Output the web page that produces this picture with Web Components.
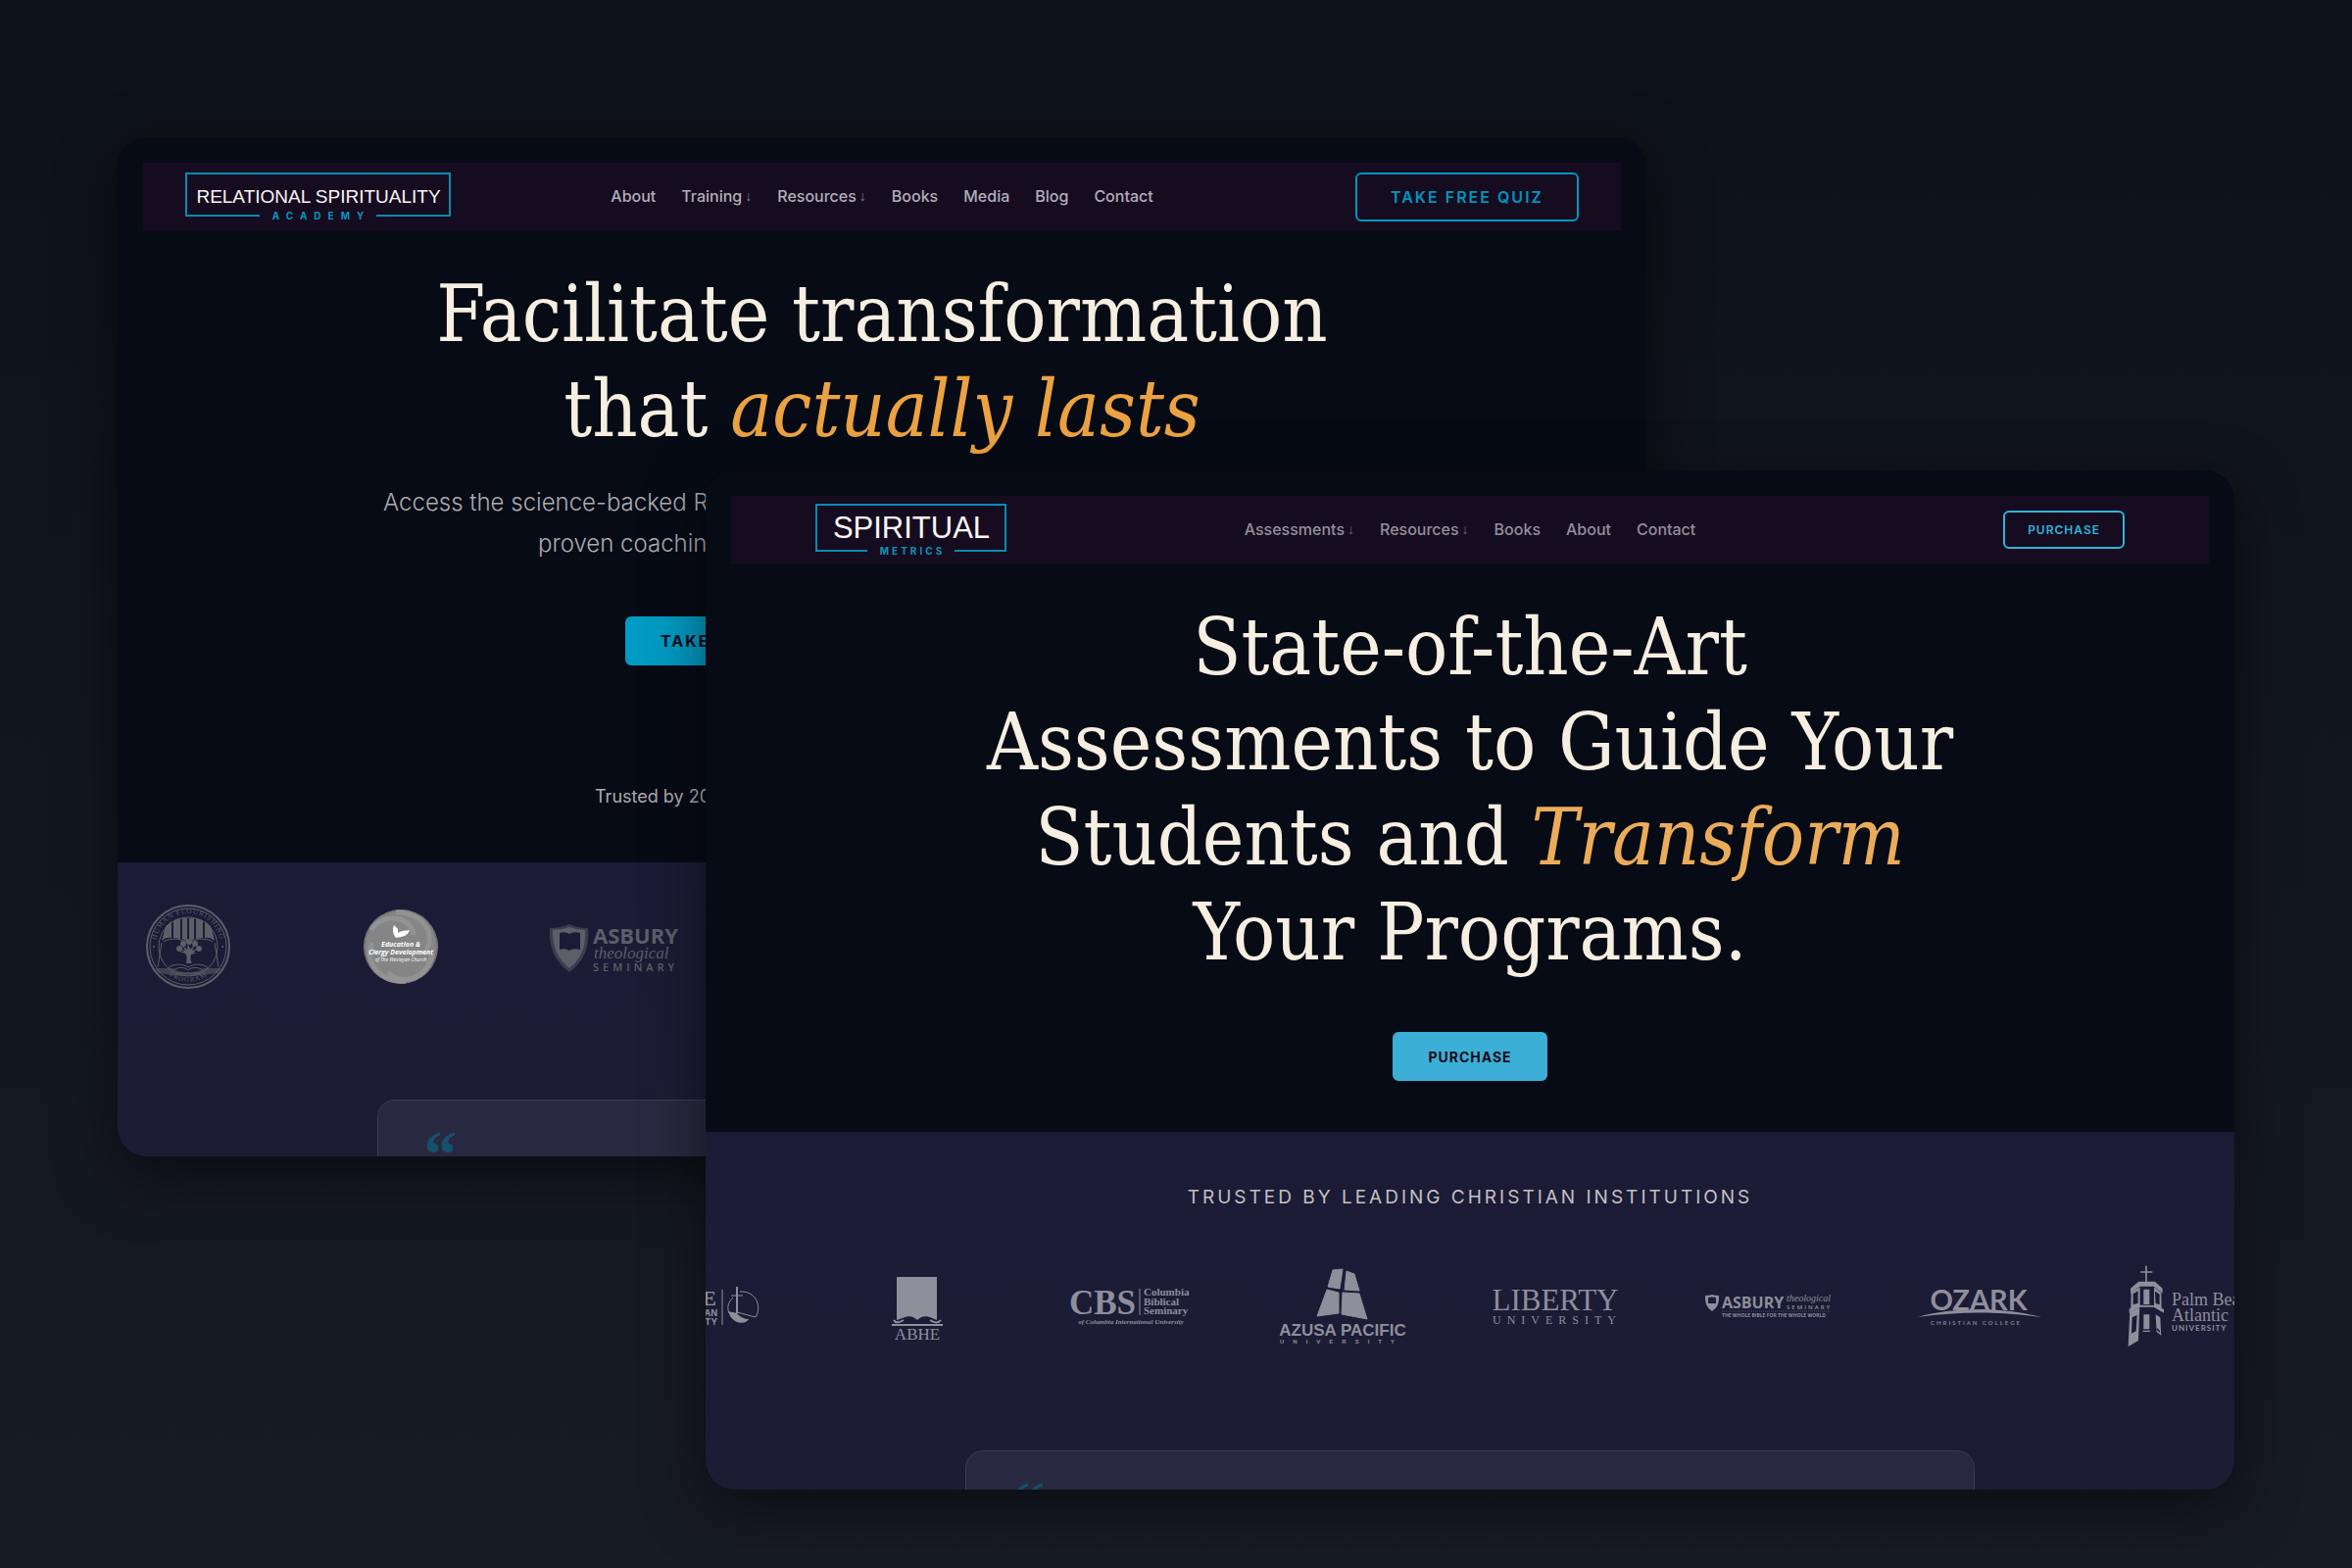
<!DOCTYPE html>
<html lang="en">
<head>
<meta charset="utf-8">
<meta name="viewport" content="width=device-width, initial-scale=1">
<title>Relational Spirituality Academy &amp; Spiritual Metrics</title>
<style>
    body {
        margin: 0;
        font-family: Inter, "Liberation Sans", sans-serif;
    }
</style>
</head>
<body>
<show-case>
    <site-window class="academy">
        <site-nav>
            <brand-logo slot="logo" name="academy"></brand-logo>
            <nav-link>About</nav-link>
            <nav-link menu>Training</nav-link>
            <nav-link menu>Resources</nav-link>
            <nav-link>Books</nav-link>
            <nav-link>Media</nav-link>
            <nav-link>Blog</nav-link>
            <nav-link>Contact</nav-link>
            <action-button slot="action" kind="outline">TAKE FREE QUIZ</action-button>
        </site-nav>
        <hero-title>Facilitate transformation<br>that <em>actually lasts</em></hero-title>
        <hero-lead>
            <span slot="first">Access the science-backed Relational</span>
            <span slot="second">proven coaching</span>
            <action-button slot="action" kind="solid">TAKE FREE QUIZ</action-button>
            <span slot="note">Trusted by 200+</span>
        </hero-lead>
        <trust-section slot="lower">
            <partner-logo name="flourishing"></partner-logo>
            <partner-logo name="clergy"></partner-logo>
            <partner-logo name="asbury"></partner-logo>
        </trust-section>
    </site-window>

    <site-window class="metrics">
        <site-nav>
            <brand-logo slot="logo" name="metrics"></brand-logo>
            <nav-link menu>Assessments</nav-link>
            <nav-link menu>Resources</nav-link>
            <nav-link>Books</nav-link>
            <nav-link>About</nav-link>
            <nav-link>Contact</nav-link>
            <action-button slot="action" kind="outline" small>PURCHASE</action-button>
        </site-nav>
        <hero-title>State-of-the-Art<br>Assessments to Guide Your<br>Students and <em>Transform</em><br>Your Programs.</hero-title>
        <hero-action>
            <action-button kind="solid" small>PURCHASE</action-button>
        </hero-action>
        <trust-section slot="lower" heading="TRUSTED BY LEADING CHRISTIAN INSTITUTIONS">
            <partner-logo name="christian"></partner-logo>
            <partner-logo name="abhe"></partner-logo>
            <partner-logo name="cbs"></partner-logo>
            <partner-logo name="azusa"></partner-logo>
            <partner-logo name="liberty"></partner-logo>
            <partner-logo name="asbury-wide"></partner-logo>
            <partner-logo name="ozark"></partner-logo>
            <partner-logo name="palm"></partner-logo>
        </trust-section>
    </site-window>
</show-case>

<script>
class ShowCase extends HTMLElement {

    constructor() {
        super();
        this.shadowDOM = this.attachShadow({ mode: "open" });
        this.shadowDOM.innerHTML = `
        <style>
            :host {
                display: block;
                position: relative;
                min-height: 100vh;
                overflow: hidden;
                background: linear-gradient(180deg, #0d1118 0%, #171b25 100%);
            }
            /* two overlapping browser windows on a free canvas */
            ::slotted(site-window) {
                position: absolute;
                width: 65%;
                aspect-ratio: 3 / 2;
            }
            ::slotted(.academy) {
                left: 5%;
                top: 8.75%;
                --accent: #0096be;
                --solid: #009bc4;
                --gold: #eba242;
                --link: #b2aeb8;
                --nav-pad: 43px;
                --row-start: 7px;
                --row-top: 36px;
                --row-bottom: 106px;
                --logo: #5d5e68;
            }
            ::slotted(.metrics) {
                left: 30%;
                top: 30%;
                --accent: #2eb5da;
                --solid: #3bafd5;
                --gold: #ebac5a;
                --link: #928f9c;
                --nav-pad: 86px;
                --row-start: -66px;
                --row-top: 46px;
                --row-bottom: 97px;
                --logo: #8f8e9b;
            }
        </style>
        <slot></slot>`;
    }
}

class SiteWindow extends HTMLElement {

    constructor() {
        super();
        this.shadowDOM = this.attachShadow({ mode: "open" });
        this.shadowDOM.innerHTML = `
        <style>
            :host {
                display: flex;
                flex-direction: column;
                overflow: hidden;
                border-radius: 30px;
                background: #070b15;
                box-shadow: 0 20px 60px rgba(0, 0, 0, 0.5);
            }
            .hero {
                padding: 26px 26px 52px;
            }
        </style>
        <div class="hero"><slot></slot></div>
        <slot name="lower"></slot>`;
    }
}

class SiteNav extends HTMLElement {

    constructor() {
        super();
        this.shadowDOM = this.attachShadow({ mode: "open" });
        this.shadowDOM.innerHTML = `
        <style>
            :host {
                display: grid;
                grid-template-columns: 1fr auto 1fr;
                align-items: center;
                height: 69px;
                padding: 0 var(--nav-pad);
                background: #160c20;
            }
            nav {
                display: flex;
                gap: 26px;
                padding-bottom: 2px;
            }
            ::slotted(action-button) {
                justify-self: end;
            }
        </style>
        <slot name="logo"></slot>
        <nav><slot></slot></nav>
        <slot name="action"></slot>`;
    }
}

class NavLink extends HTMLElement {

    constructor() {
        super();
        this.shadowDOM = this.attachShadow({ mode: "open" });
    }

    connectedCallback() {
        const arrow = this.hasAttribute("menu") ? `<span class="arrow">↓</span>` : "";
        this.shadowDOM.innerHTML = `
        <style>
            :host {
                display: block;
            }
            a {
                display: flex;
                align-items: center;
                gap: 3px;
                color: var(--link);
                font-size: 16px;
                font-weight: 500;
                line-height: 24px;
                text-decoration: none;
            }
            .arrow {
                font-family: "Liberation Sans", sans-serif;
                font-size: 14px;
                opacity: 0.7;
            }
        </style>
        <a href="#"><span><slot></slot></span>${arrow}</a>`;
    }
}

class ActionButton extends HTMLElement {

    constructor() {
        super();
        this.shadowDOM = this.attachShadow({ mode: "open" });
        this.shadowDOM.innerHTML = `
        <style>
            :host {
                display: block;
            }
            button {
                display: block;
                box-sizing: border-box;
                height: 50px;
                padding: 0 34px;
                border: 2px solid var(--accent);
                border-radius: 6px;
                background: transparent;
                color: var(--accent);
                font-family: inherit;
                font-size: 16px;
                font-weight: 600;
                letter-spacing: 2px;
                white-space: nowrap;
            }
            :host([kind="solid"]) button {
                border-color: var(--solid);
                background: var(--solid);
                color: #160c20;
                font-weight: 700;
            }
            :host([small]) button {
                font-size: 14px;
                letter-spacing: 1px;
            }
            :host([small][kind="outline"]) button {
                height: 39px;
                padding: 0 23px;
                font-size: 12px;
            }
        </style>
        <button type="button"><slot></slot></button>`;
    }
}

class HeroTitle extends HTMLElement {

    constructor() {
        super();
        this.shadowDOM = this.attachShadow({ mode: "open" });
        this.shadowDOM.innerHTML = `
        <style>
            :host {
                display: block;
                margin-top: 37px;
            }
            h1 {
                margin: 0;
                color: #f6eee1;
                font-family: "DejaVu Serif Condensed", "DejaVu Serif", serif;
                font-size: 80px;
                font-weight: 400;
                line-height: 97px;
                text-align: center;
            }
            ::slotted(em) {
                color: var(--gold);
            }
        </style>
        <h1><slot></slot></h1>`;
    }
}

class HeroLead extends HTMLElement {

    constructor() {
        super();
        this.shadowDOM = this.attachShadow({ mode: "open" });
        this.shadowDOM.innerHTML = `
        <style>
            :host {
                display: flex;
                flex-direction: column;
                align-items: center;
                margin-top: 26px;
                color: #aeaab0;
                white-space: nowrap;
            }
            p {
                margin: 0;
                font-size: 24px;
                font-weight: 300;
                line-height: 42px;
            }
            .first {
                width: 1018px;
            }
            .second {
                width: 702px;
            }
            .actions {
                width: 524px;
                margin-top: 53px;
            }
            .note {
                width: 586px;
                margin-top: 119px;
                font-size: 18px;
                font-weight: 400;
                line-height: 30px;
            }
        </style>
        <p class="first"><slot name="first"></slot></p>
        <p class="second"><slot name="second"></slot></p>
        <div class="actions"><slot name="action"></slot></div>
        <p class="note"><slot name="note"></slot></p>`;
    }
}

class HeroAction extends HTMLElement {

    constructor() {
        super();
        this.shadowDOM = this.attachShadow({ mode: "open" });
        this.shadowDOM.innerHTML = `
        <style>
            :host {
                display: flex;
                justify-content: center;
                margin-top: 53px;
            }
        </style>
        <slot></slot>`;
    }
}

class TrustSection extends HTMLElement {

    constructor() {
        super();
        this.shadowDOM = this.attachShadow({ mode: "open" });
    }

    connectedCallback() {
        const heading = this.getAttribute("heading");
        this.shadowDOM.innerHTML = `
        <style>
            :host {
                display: block;
                flex: 1;
                background: linear-gradient(180deg, #1b1b36, #1c1d33);
            }
            h2 {
                margin: 0;
                padding-top: 52px;
                color: #c4c0c0;
                font-size: 19px;
                font-weight: 400;
                letter-spacing: 3px;
                line-height: 30px;
                text-align: center;
            }
            .row {
                display: flex;
                gap: 87px;
                padding: var(--row-top) 0 var(--row-bottom);
                margin-left: var(--row-start);
            }
            blockquote {
                box-sizing: border-box;
                width: 66%;
                height: 240px;
                margin: 0 auto;
                padding: 23px 46px;
                border: 1px solid #3b3c50;
                border-radius: 18px;
                background: #282940;
                color: #174f6e;
                font-family: "Liberation Serif", serif;
                font-size: 68px;
                font-weight: 700;
                line-height: 64px;
            }
        </style>
        ${heading ? `<h2>${heading}</h2>` : ""}
        <div class="row"><slot></slot></div>
        <blockquote>“</blockquote>`;
    }
}

const brands = {
    academy: `
        <svg width="271" height="50" viewBox="0 0 271 50" role="img">
            <path class="frame" d="M76 44H1V1H270V44H195"/>
            <text class="name" x="136" y="31" font-size="19" font-family="Liberation Sans">RELATIONAL SPIRITUALITY</text>
            <text class="sub" x="139" y="48" font-size="10" letter-spacing="7">ACADEMY</text>
        </svg>`,
    metrics: `
        <svg width="195" height="54" viewBox="0 0 195 54" role="img">
            <path class="frame" d="M53 48H1V1H194V48H142"/>
            <text class="name" x="98" y="35" font-size="31" font-family="Liberation Sans">SPIRITUAL</text>
            <text class="sub" x="99" y="52" font-size="10" letter-spacing="3">METRICS</text>
        </svg>`
};

class BrandLogo extends HTMLElement {

    constructor() {
        super();
        this.shadowDOM = this.attachShadow({ mode: "open" });
    }

    connectedCallback() {
        this.shadowDOM.innerHTML = `
        <style>
            :host {
                display: block;
            }
            a, svg {
                display: block;
                width: max-content;
            }
            .frame {
                fill: none;
                stroke: #078cb0;
                stroke-width: 2;
            }
            text {
                text-anchor: middle;
            }
            .name {
                fill: #f8f6f4;
            }
            .sub {
                fill: #0a96bb;
                font-weight: 700;
            }
        </style>
        <a href="#">${brands[this.getAttribute("name")]}</a>`;
    }
}

// every partner mark is drawn on a 130 x 100 slot
const partners = {
    flourishing: `
        <circle cx="65" cy="50" r="42" class="line" stroke-width="2"/>
        <circle cx="65" cy="50" r="39" class="line" stroke-width="1"/>
        <circle cx="65" cy="50" r="30" class="line" stroke-width="1"/>
        <path id="arc-top" d="M33 57A33 33 0 1 1 97 57" fill="none"/>
        <path id="arc-bottom" d="M39 75A37 37 0 0 0 91 75" fill="none"/>
        <text font-size="7" font-family="Liberation Serif" letter-spacing="1"><textPath href="#arc-top" startOffset="50%" text-anchor="middle">HUMAN FLOURISHING</textPath></text>
        <text font-size="7" font-family="Liberation Serif" letter-spacing="1"><textPath href="#arc-bottom" startOffset="50%" text-anchor="middle">PROGRAM</textPath></text>
        <path d="M38 44L42 29L48 24V41C45 40 41 41 38 44ZM50 23L57 21V42L50 41ZM59 21H64V45L59 42ZM66 21H71L71 42L66 45ZM73 21L80 23V41L73 42ZM82 24L88 29L92 44C89 41 85 40 82 41Z"/>
        <path class="line" d="M40 45C48 40 60 42 65 47C70 42 82 40 90 45M38 46L34 71M92 46L96 71"/>
        <path d="M63 67C64 62 64 59 62 57L56 55L61 55L55 51L62 54L58 47L64 53L65 46L67 53L72 47L69 54L76 51L70 56L74 56L68 58C67 61 67 64 69 67Z"/>
        <g><circle cx="56" cy="52" r="3"/><circle cx="60" cy="47" r="3"/><circle cx="66" cy="45" r="3"/><circle cx="72" cy="47" r="3"/><circle cx="76" cy="52" r="3"/></g>
        <path class="line" d="M44 72C52 66 60 68 65 71C70 68 78 66 86 72M50 74C56 70 61 71 65 74C69 71 74 70 80 74M52 77H78"/>
        <path d="M31 72H50C56 78 74 78 80 72H99L95 77C85 78 76 80 65 80S45 78 35 77Z" opacity=".6"/>
        <circle cx="30" cy="50" r="1"/><circle cx="100" cy="50" r="1"/>`,
    clergy: `
        <circle cx="65" cy="50" r="38" fill="#858585"/>
        <circle cx="65" cy="50" r="37" fill="none" stroke="#6b6b70" stroke-width="1"/>
        <g fill="none" stroke="#949393" stroke-width="5">
            <path d="M35 33C45 15 76 18 78 38"/><path d="M60 15C90 14 103 42 88 57"/>
            <path d="M97 58C93 82 66 92 52 76"/><path d="M70 85C46 88 26 66 36 46"/>
        </g>
        <g fill="#fff" text-anchor="middle" font-weight="700" font-style="italic" font-family="Open Sans">
            <path d="M58 28L62 32V36C66 33 70 34 74 33C72 39 67 40 60 41C57 37 56 33 58 28Z"/>
            <text x="65" y="50" font-size="7">Education &amp;</text>
            <text x="65" y="58" font-size="7">Clergy Development</text>
            <text x="65" y="65" font-size="5" font-weight="400">of The Wesleyan Church</text>
        </g>`,
    asbury: `
        <path d="M0 31Q12 31 20 27Q28 31 39 31Q42 60 20 76Q-2 60 0 31Z" opacity=".5"/>
        <path d="M3 33Q12 33 20 30Q28 33 36 33Q38 58 20 72Q2 58 3 33Z"/>
        <path d="M10 36Q16 34 20 37Q24 34 31 36V53Q24 51 20 54Q16 51 10 53Z" fill="#1b1b36"/>
        <text x="44" y="47" font-size="22" font-weight="700" font-family="Open Sans">ASBURY</text>
        <text x="45" y="62" font-size="17" font-style="italic" font-family="Liberation Serif">theological</text>
        <text x="44" y="75" font-size="11" font-weight="600" letter-spacing="4" font-family="Open Sans">SEMINARY</text>`,
    christian: `
        <g text-anchor="end">
            <text x="77" y="49" font-size="22" font-family="Liberation Serif" font-weight="700">E</text>
            <text x="78" y="60" font-size="9" font-weight="700">AN</text>
            <text x="78" y="69" font-size="9" font-weight="700">TY</text>
        </g>
        <path class="line" d="M83 33V69M92 39H104"/>
        <path class="line" stroke-width="2" d="M98 30V57"/>
        <path class="line" d="M101 35C115 34 122 46 119 57L117 61L98 56M94 41C88 47 88 52 90 57"/>
        <path d="M89 55L98 57C101 61 106 63 110 63C108 68 97 69 91 60Z"/>`,
    abhe: `
        <path d="M44 20H85V64L80 62C74 59 69 60 65 64C61 60 56 59 50 62L44 64Z"/>
        <path class="line" stroke-width="2" d="M41 64C43 68 48 66 51 64M89 64C86 68 81 66 78 64M39 69H91"/>
        <text x="65" y="84" font-size="17" text-anchor="middle" font-family="Liberation Serif">ABHE</text>`,
    cbs: `
        <text x="3" y="58" font-size="35" font-weight="700" font-family="Liberation Serif">CBS</text>
        <path class="line" d="M75 32V59"/>
        <g font-family="Liberation Serif" font-weight="700" font-size="11">
            <text x="79" y="39">Columbia</text><text x="79" y="49">Biblical</text><text x="79" y="58">Seminary</text>
            <text x="66" y="68" font-size="7" font-style="italic" text-anchor="middle">of Columbia International University</text>
        </g>`,
    azusa: `
        <path stroke="currentColor" stroke-linejoin="round" d="M55 13L65 12L62 32L50 30ZM69 14L77 17L82 34L67 33ZM49 33L61 36V57L39 60ZM65 36L82 37L90 63L64 58Z"/>
        <text x="65" y="80" font-size="17" font-weight="700" text-anchor="middle" font-family="Liberation Sans">AZUSA PACIFIC</text>
        <text x="1" y="88" font-size="6" font-weight="700" letter-spacing="9" font-family="Liberation Sans">UNIVERSITY</text>`,
    liberty: `
        <text x="65" y="54" font-size="31" text-anchor="middle" font-family="Liberation Serif">LIBERTY</text>
        <text x="1" y="68" font-size="12" letter-spacing="6" font-family="Liberation Serif">UNIVERSITY</text>`,
    "asbury-wide": `
        <path d="M1 39Q5 39 8 38Q11 39 15 39Q16 50 8 55Q0 50 1 39Z"/>
        <path d="M4 41Q8 40 12 41V47H4Z" fill="#1b1b36"/>
        <text x="18" y="52" font-size="16" font-weight="700" font-family="Open Sans">ASBURY</text>
        <text x="84" y="45" font-size="10" font-style="italic" font-family="Liberation Serif">theological</text>
        <text x="84" y="53" font-size="6" font-weight="600" letter-spacing="2" font-family="Open Sans">SEMINARY</text>
        <path class="line" stroke-dasharray="1 1" opacity=".4" d="M18 55H129"/>
        <text x="18" y="61" font-size="5" font-weight="700" font-family="Open Sans">THE WHOLE BIBLE FOR THE WHOLE WORLD</text>`,
    ozark: `
        <text x="63" y="54" font-size="29" font-weight="700" text-anchor="middle" font-family="Lato">OZARK</text>
        <path d="M1 61C35 51 88 50 127 61C88 55 42 55 1 61Z"/>
        <text x="14" y="69" font-size="6" font-weight="600" letter-spacing="2" font-family="Lato">CHRISTIAN COLLEGE</text>`,
    palm: `
        <g transform="translate(-273 -14) scale(.3333)">
            <path class="line" stroke-width="5" d="M870 68V118M852 87H889"/>
            <path d="M822 137L847 116H897L920 137V152L894 131H851L822 152Z"/>
            <path d="M824 150L851 133V188L894 189V133L916 150L917 197L924 201V212L893 194H852L818 213V201L823 196Z"/>
            <path d="M820 210L850 196L846 297L815 315Z"/>
            <path d="M862 217H880V262H862ZM860 266H882V270H860ZM899 217L913 226L916 281L902 270Z"/>
            <g fill="#1b1b36">
                <path d="M830 154L845 145V182L830 187ZM854 142H860V184H854ZM882 142H888V184H882ZM897 146L911 155V187L899 183Z"/>
                <path d="M827 226L842 219L839 268L825 275ZM902 264L912 272V266L903 258Z"/>
            </g>
            <path d="M862 140H880V186H862Z"/>
        </g>
        <g font-size="18" font-family="Liberation Serif">
            <text x="43" y="49">Palm Beach</text><text x="43" y="65">Atlantic</text>
        </g>
        <text x="43" y="75" font-size="8" font-weight="700" letter-spacing="1" font-family="Lato">UNIVERSITY</text>`
};

class PartnerLogo extends HTMLElement {

    constructor() {
        super();
        this.shadowDOM = this.attachShadow({ mode: "open" });
    }

    connectedCallback() {
        this.shadowDOM.innerHTML = `
        <style>
            :host {
                display: block;
                flex: none;
                color: var(--logo);
            }
            svg {
                display: block;
                overflow: visible;
                fill: currentColor;
            }
            .line {
                fill: none;
                stroke: currentColor;
            }
        </style>
        <svg width="130" height="100" viewBox="0 0 130 100" role="img">${partners[this.getAttribute("name")]}</svg>`;
    }
}

customElements.define("show-case", ShowCase);
customElements.define("site-window", SiteWindow);
customElements.define("site-nav", SiteNav);
customElements.define("nav-link", NavLink);
customElements.define("action-button", ActionButton);
customElements.define("hero-title", HeroTitle);
customElements.define("hero-lead", HeroLead);
customElements.define("hero-action", HeroAction);
customElements.define("trust-section", TrustSection);
customElements.define("brand-logo", BrandLogo);
customElements.define("partner-logo", PartnerLogo);
</script>
</body>
</html>
